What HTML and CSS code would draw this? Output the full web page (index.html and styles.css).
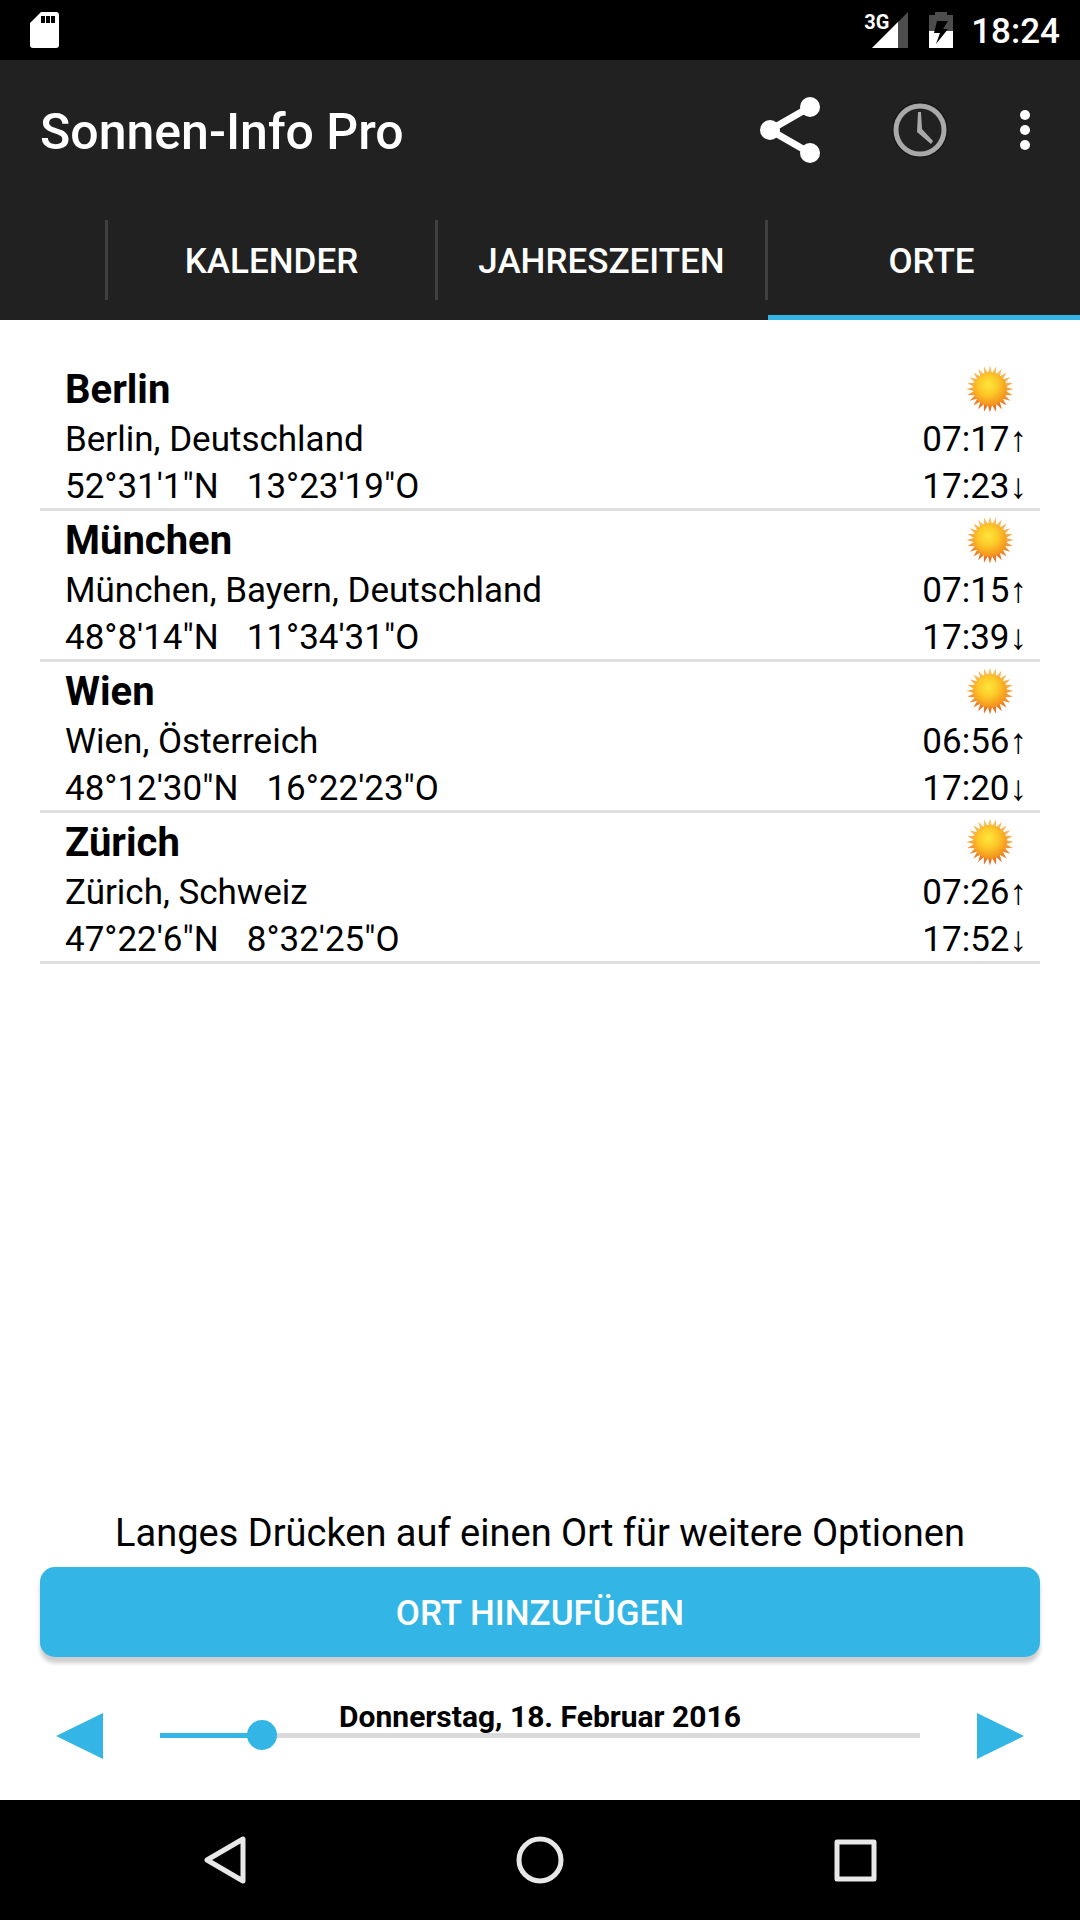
FILE: index.html
```html
<!DOCTYPE html>
<html lang="de">
<head>
    <meta charset="UTF-8">
    <meta name="viewport" content="width=device-width, initial-scale=1.0">
    <title>Sonnen-Info Pro</title>
    <link rel="stylesheet" href="styles.css">
</head>
<body>
    <!-- Shared sun icon -->
    <svg class="defs" width="0" height="0" aria-hidden="true">
        <defs>
            <linearGradient id="rays" x1="0" y1="0" x2="0" y2="1">
                <stop offset="0" stop-color="#f7c873"/>
                <stop offset="0.5" stop-color="#f5a742"/>
                <stop offset="1" stop-color="#e2651a"/>
            </linearGradient>
            <radialGradient id="disc" cx="0.45" cy="0.38" r="0.65">
                <stop offset="0" stop-color="#ffe63c"/>
                <stop offset="0.45" stop-color="#fdc928"/>
                <stop offset="1" stop-color="#f38a1c"/>
            </radialGradient>
            <symbol id="sun" viewBox="-23 -23 46 46">
                <path fill="url(#rays)" d="M22.5 0L15.3 2L21.7 5.8L14.3 5.9L19.5 11.3L12.3 9.4L15.9 15.9L9.4 12.3L11.3 19.5L5.9 14.3L5.8 21.7L2 15.3L0 22.5L-2 15.3L-5.8 21.7L-5.9 14.3L-11.3 19.5L-9.4 12.3L-15.9 15.9L-12.3 9.4L-19.5 11.3L-14.3 5.9L-21.7 5.8L-15.3 2L-22.5 0L-15.3 -2L-21.7 -5.8L-14.3 -5.9L-19.5 -11.3L-12.3 -9.4L-15.9 -15.9L-9.4 -12.3L-11.3 -19.5L-5.9 -14.3L-5.8 -21.7L-2 -15.3L0 -22.5L2 -15.3L5.8 -21.7L5.9 -14.3L11.3 -19.5L9.4 -12.3L15.9 -15.9L12.3 -9.4L19.5 -11.3L14.3 -5.9L21.7 -5.8L15.3 -2Z"/>
                <circle r="16" fill="url(#disc)"/>
            </symbol>
        </defs>
    </svg>

    <div class="status-bar">
        <svg class="sd-icon" width="30" height="36" viewBox="0 0 30 36" aria-hidden="true">
            <path fill="#fff" fill-rule="evenodd" d="M11 0H26Q29 0 29 3V33Q29 36 26 36H3Q0 36 0 33V11ZM11 4V11H15V4ZM16 4V11H20V4ZM21 4V11H25V4Z"/>
        </svg>
        <div class="signal">
            <span class="network">3G</span>
            <svg width="36" height="36" viewBox="0 0 36 36" aria-hidden="true">
                <path fill="#4d4d4d" d="M36 0V36H0Z"/>
                <path fill="#fff" d="M26 10V36H0Z"/>
            </svg>
        </div>
        <svg class="battery" width="24" height="36" viewBox="0 0 24 36" aria-hidden="true">
            <path fill="#4d4d4d" d="M6 0H18V3H24V19H0V3H6Z"/>
            <path fill="#fff" d="M0 19H24V36H0Z"/>
            <path fill="#000" d="M8 9H19L14 17H19L7 32L11 21H5Z"/>
        </svg>
        <span class="clock">18:24</span>
    </div>

    <header class="app-header">
        <div class="action-bar">
            <h1>Sonnen-Info Pro</h1>
            <button class="icon-button" aria-label="Teilen">
                <svg width="60" height="68" viewBox="0 0 60 68">
                    <path fill="none" stroke="#fff" stroke-width="7" d="M50 11L10 34L50 57"/>
                    <circle cx="50" cy="11" r="10" fill="#fff"/>
                    <circle cx="10" cy="34" r="10" fill="#fff"/>
                    <circle cx="50" cy="57" r="10" fill="#fff"/>
                </svg>
            </button>
            <button class="icon-button clock-button" aria-label="Uhrzeit">
                <svg width="60" height="60" viewBox="0 0 60 60">
                    <circle cx="30" cy="30" r="27" fill="none" stroke="#181818" stroke-width="2"/>
                    <circle cx="30" cy="30" r="24" fill="none" stroke="#a9a9a9" stroke-width="5"/>
                    <path fill="#a9a9a9" d="M28 12H31L32 29L43 41L41 44L27 32Z"/>
                </svg>
            </button>
            <button class="icon-button" aria-label="Weitere Optionen">
                <svg width="30" height="60" viewBox="0 0 30 60">
                    <circle cx="15" cy="15" r="5" fill="#fff"/>
                    <circle cx="15" cy="30" r="5" fill="#fff"/>
                    <circle cx="15" cy="45" r="5" fill="#fff"/>
                </svg>
            </button>
        </div>
        <nav class="tabs">
            <a href="#" class="tab" aria-label="Vorherige"></a>
            <a href="#kalender" class="tab">KALENDER</a>
            <a href="#jahreszeiten" class="tab">JAHRESZEITEN</a>
            <a href="#orte" class="tab active">ORTE</a>
        </nav>
    </header>

    <main class="content" id="orte">
        <ul class="places">
            <li class="place">
                <div class="place-info">
                    <h2>Berlin</h2>
                    <p>Berlin, Deutschland</p>
                    <p class="coords"><span>52°31'1"N</span><span>13°23'19"O</span></p>
                </div>
                <div class="place-times">
                    <svg class="sun"><use href="#sun"/></svg>
                    <p>07:17<span class="arrow">↑</span></p>
                    <p>17:23<span class="arrow">↓</span></p>
                </div>
            </li>
            <li class="place">
                <div class="place-info">
                    <h2>München</h2>
                    <p>München, Bayern, Deutschland</p>
                    <p class="coords"><span>48°8'14"N</span><span>11°34'31"O</span></p>
                </div>
                <div class="place-times">
                    <svg class="sun"><use href="#sun"/></svg>
                    <p>07:15<span class="arrow">↑</span></p>
                    <p>17:39<span class="arrow">↓</span></p>
                </div>
            </li>
            <li class="place">
                <div class="place-info">
                    <h2>Wien</h2>
                    <p>Wien, Österreich</p>
                    <p class="coords"><span>48°12'30"N</span><span>16°22'23"O</span></p>
                </div>
                <div class="place-times">
                    <svg class="sun"><use href="#sun"/></svg>
                    <p>06:56<span class="arrow">↑</span></p>
                    <p>17:20<span class="arrow">↓</span></p>
                </div>
            </li>
            <li class="place">
                <div class="place-info">
                    <h2>Zürich</h2>
                    <p>Zürich, Schweiz</p>
                    <p class="coords"><span>47°22'6"N</span><span>8°32'25"O</span></p>
                </div>
                <div class="place-times">
                    <svg class="sun"><use href="#sun"/></svg>
                    <p>07:26<span class="arrow">↑</span></p>
                    <p>17:52<span class="arrow">↓</span></p>
                </div>
            </li>
        </ul>

        <p class="hint">Langes Drücken auf einen Ort für weitere Optionen</p>
        <button class="add-button">ORT HINZUFÜGEN</button>

        <div class="date-row">
            <button class="step-button" aria-label="Vorheriger Tag">
                <svg width="48" height="48" viewBox="0 0 48 48"><path fill="#33b5e5" d="M1 24L48 1V47Z"/></svg>
            </button>
            <div class="date-slider">
                <label for="day">Donnerstag, 18. Februar 2016</label>
                <input type="range" id="day" min="0" max="365" value="49">
            </div>
            <button class="step-button" aria-label="Nächster Tag">
                <svg width="48" height="48" viewBox="0 0 48 48"><path fill="#33b5e5" d="M47 24L0 1V47Z"/></svg>
            </button>
        </div>
    </main>

    <!-- System navigation -->
    <footer class="nav-bar">
        <button class="nav-button" aria-label="Zurück">
            <svg width="50" height="50" viewBox="0 0 50 50"><path d="M43 4V46L7 25Z"/></svg>
        </button>
        <button class="nav-button" aria-label="Startseite">
            <svg width="50" height="50" viewBox="0 0 50 50"><circle cx="25" cy="25" r="21"/></svg>
        </button>
        <button class="nav-button" aria-label="Übersicht">
            <svg width="50" height="50" viewBox="0 0 50 50"><rect x="7" y="7" width="37" height="37"/></svg>
        </button>
    </footer>
</body>
</html>
```

FILE: styles.css
```css
* {
    box-sizing: border-box;
}

body {
    display: flex;
    flex-direction: column;
    min-height: 100vh;
    margin: 0;
    font-family: Roboto, "Noto Sans", sans-serif;
    font-size: 35px;
    color: #000;
    background-color: #fff;
}

h1, h2, p, ul {
    margin: 0;
    padding: 0;
}

button {
    padding: 0;
    border: 0;
    background: none;
    font: inherit;
    color: inherit;
}

svg {
    display: block;
}

.defs {
    position: absolute;
}

/* Status bar */
.status-bar {
    display: flex;
    align-items: center;
    height: 60px;
    padding: 0 20px 0 30px;
    background-color: #000;
    color: #fff;
}

.sd-icon {
    margin-right: auto;
}

.signal {
    position: relative;
    margin-right: 21px;
}

.network {
    position: absolute;
    top: 0;
    left: -8px;
    font-size: 20px;
    line-height: 20px;
    font-weight: 700;
}

.clock {
    padding-top: 2px;
    margin-left: 18px;
    font-weight: 500;
}

/* Header */
.app-header {
    background-color: #212121;
    color: #fff;
}

.action-bar {
    display: flex;
    align-items: center;
    height: 140px;
    padding: 0 40px;
}

.action-bar h1 {
    padding-top: 4px;
    margin-right: auto;
    font-size: 50px;
    font-weight: 500;
}

.clock-button {
    margin: 0 60px 0 70px;
}

.tabs {
    display: grid;
    grid-template-columns: 108px repeat(3, 330px);
    height: 120px;
    overflow: hidden;
}

.tab {
    position: relative;
    display: flex;
    align-items: center;
    justify-content: center;
    padding: 2px 3px 0 0;
    font-weight: 500;
    color: #fff;
    text-decoration: none;
}

.tab::after {
    content: '';
    position: absolute;
    top: 20px;
    right: 0;
    width: 3px;
    height: 80px;
    background-color: #404040;
}

.tab.active {
    box-shadow: inset 0 -5px #33b5e5;
}

/* Places */
.content {
    flex: 1;
    display: flex;
    flex-direction: column;
    padding: 40px 40px 34px;
}

.places {
    list-style: none;
    margin-bottom: auto;
}

.place {
    display: flex;
    justify-content: space-between;
    height: 151px;
    padding: 3px 13px 0 25px;
    border-bottom: 3px solid #dedede;
    line-height: 47px;
}

.place h2 {
    font-size: 40px;
    line-height: 53px;
    font-weight: 700;
}

.coords {
    display: flex;
    gap: 28px;
}

.place-times {
    text-align: right;
}

.sun {
    width: 48px;
    height: 48px;
    margin: 2px 13px 3px auto;
}

.arrow {
    font-family: "Liberation Serif", serif;
}

/* Bottom controls */
.hint {
    font-size: 38px;
    line-height: 46px;
    margin-bottom: 11px;
    text-align: center;
}

.add-button {
    height: 90px;
    padding-top: 2px;
    border-radius: 15px;
    background-color: #33b5e5;
    box-shadow: 0 6px 4px rgba(0, 0, 0, 0.2);
    font-weight: 500;
    color: #fff;
}

.date-row {
    display: flex;
    align-items: center;
    height: 60px;
    margin: 49px 15px 0;
}

/* Date label lies over the slider track */
.date-slider {
    flex: 1;
    display: grid;
    margin: 0 42px 2px;
}

.date-slider label,
.date-slider input {
    grid-area: 1 / 1;
}

.date-slider label {
    z-index: 1;
    align-self: start;
    justify-self: center;
    font-size: 30px;
    line-height: 24px;
    font-weight: 700;
    pointer-events: none;
}

.date-slider input {
    appearance: none;
    width: 100%;
    height: 60px;
    margin: 0;
    background: none;
}

.date-slider input::-webkit-slider-runnable-track {
    height: 30px;
    background:
        linear-gradient(#33b5e5, #33b5e5) 15px center / 102px 5px no-repeat,
        linear-gradient(#dadada, #dadada) center / calc(100% - 30px) 5px no-repeat;
}

.date-slider input::-webkit-slider-thumb {
    appearance: none;
    width: 30px;
    height: 30px;
    border-radius: 50%;
    background-color: #33b5e5;
}

/* Navigation bar */
.nav-bar {
    display: flex;
    align-items: center;
    justify-content: center;
    gap: 265px;
    height: 120px;
    background-color: #000;
}

.nav-button svg {
    fill: none;
    stroke: #e8e8e8;
    stroke-width: 5;
    stroke-linejoin: round;
}
```
